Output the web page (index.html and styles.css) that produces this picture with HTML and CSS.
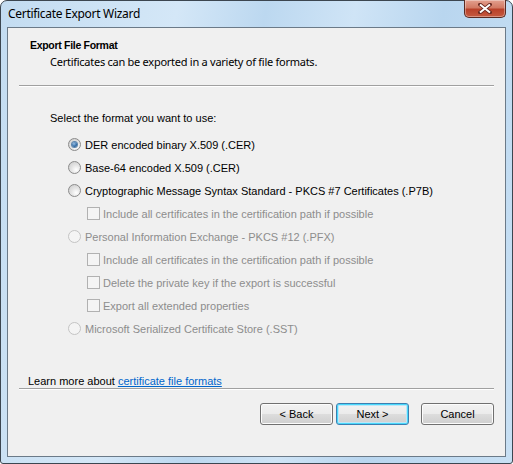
FILE: index.html
```html
<!DOCTYPE html>
<html lang="en">
<head>
  <meta charset="UTF-8" />
  <title>Certificate Export Wizard</title>
  <link rel="stylesheet" href="styles.css">
</head>
<body>
  <div class="window">
    <div class="titlebar">
      <span class="title">Certificate Export Wizard</span>
      <button class="close" aria-label="Close">
        <svg width="14" height="11" viewBox="0 0 14 11">
          <path d="M2 1.5 L12 9.5 M12 1.5 L2 9.5" stroke="#6b2a22" stroke-width="3.6" stroke-linecap="square"/>
          <path d="M2 1.5 L12 9.5 M12 1.5 L2 9.5" stroke="#ffffff" stroke-width="2"/>
        </svg>
      </button>
    </div>

    <div class="client">
      <div class="header">
        <div class="heading">Export File Format</div>
        <div class="subheading">Certificates can be exported in a variety of file formats.</div>
      </div>
      <div class="sep"></div>

      <div class="content">
        <p class="prompt">Select the format you want to use:</p>
        <ul class="options">
          <li class="opt"><span class="radio checked"></span>DER encoded binary X.509 (.CER)</li>
          <li class="opt"><span class="radio"></span>Base-64 encoded X.509 (.CER)</li>
          <li class="opt"><span class="radio"></span>Cryptographic Message Syntax Standard - PKCS #7 Certificates (.P7B)</li>
          <li class="opt sub disabled"><span class="check"></span>Include all certificates in the certification path if possible</li>
          <li class="opt disabled"><span class="radio"></span>Personal Information Exchange - PKCS #12 (.PFX)</li>
          <li class="opt sub disabled"><span class="check"></span>Include all certificates in the certification path if possible</li>
          <li class="opt sub disabled"><span class="check"></span>Delete the private key if the export is successful</li>
          <li class="opt sub disabled"><span class="check"></span>Export all extended properties</li>
          <li class="opt disabled"><span class="radio"></span>Microsoft Serialized Certificate Store (.SST)</li>
        </ul>
        <p class="learn">Learn more about <a href="#">certificate file formats</a></p>
      </div>

      <div class="sep"></div>
      <div class="buttons">
        <button class="btn">&lt; Back</button>
        <button class="btn default">Next &gt;</button>
        <button class="btn cancel">Cancel</button>
      </div>
    </div>
  </div>
</body>
</html>
```

FILE: styles.css
```css
* { box-sizing: border-box; }
body {
  margin: 0;
  background: #ffffff;
  font-family: "Liberation Sans", Arial, sans-serif;
  font-size: 11px;
  color: #000;
}
.window {
  width: 513px;
  height: 464px;
  border: 1px solid #3c4650;
  border-radius: 7px 7px 3px 3px;
  background: linear-gradient(100deg, #c3dcf1 0%, #d4e7f7 30%, #bcd8f0 45%, #cfe4f6 60%, #b9d6ef 75%, #c8e0f4 100%);
  display: flex;
  flex-direction: column;
}
.titlebar {
  height: 26px;
  display: flex;
  justify-content: space-between;
  align-items: flex-start;
  padding-left: 7px;
}
.title {
  font-family: "Noto Sans", sans-serif;
  font-size: 12px;
  line-height: 26px;
  color: #000;
  letter-spacing: -0.3px;
}
.close {
  width: 42px;
  height: 18px;
  margin-top: -1px;
  margin-right: 6px;
  border: 1px solid #5a2a22;
  border-top: none;
  border-radius: 0 0 5px 5px;
  background: linear-gradient(#e3a08f 0%, #d27a64 45%, #b9412a 55%, #c55a40 100%);
  box-shadow: inset 0 0 0 1px rgba(255, 255, 255, 0.35);
  display: flex;
  align-items: center;
  justify-content: center;
  padding: 0;
}
.client {
  margin: 0 6px;
  height: 430px;
  border: 1px solid #6b7a88;
  background: #f0f0f0;
  display: flex;
  flex-direction: column;
}
.header {
  height: 57px;
  padding: 10px 0 0 22px;
}
.heading {
  font-weight: bold;
  font-size: 10.5px;
  letter-spacing: -0.3px;
  line-height: 14px;
}
.subheading {
  font-family: "Noto Sans", sans-serif;
  font-size: 11px;
  line-height: 15px;
  margin: 2px 0 0 20px;
  letter-spacing: -0.26px;
}
.sep {
  height: 2px;
  margin: 0 11px;
  border-top: 1px solid #a0a0a0;
  border-bottom: 1px solid #ffffff;
}
.content {
  height: 301px;
  padding: 24px 0 0 42px;
}
.prompt {
  margin: 0;
  line-height: 14px;
}
.options {
  list-style: none;
  margin: 8px 0 0 18px;
  padding: 0;
}
.opt {
  height: 23px;
  display: flex;
  align-items: center;
}
.opt.sub { padding-left: 19px; }
.opt.disabled { color: #8d8d8d; }
.radio {
  width: 13px;
  height: 13px;
  margin-right: 4px;
  border-radius: 50%;
  border: 1px solid #8b8b8b;
  background: radial-gradient(circle at 65% 70%, #ffffff 0%, #e4e4e4 45%, #c8c8c8 100%);
  display: flex;
  align-items: center;
  justify-content: center;
}
.radio.checked::after {
  content: "";
  width: 5px;
  height: 5px;
  border-radius: 50%;
  background: radial-gradient(circle at 40% 35%, #9ac0e4 0%, #2f6aa5 60%, #1c3f66 100%);
  box-shadow: 0 0 0 1px #5e86ad;
}
.disabled .radio {
  border-color: #c4c4c4;
  background: #f4f4f4;
}
.check {
  width: 13px;
  height: 13px;
  margin-right: 3px;
  border: 1px solid #b1b1b1;
  background: #f4f4f4;
}
.learn {
  margin: 34px 0 0 -22px;
  line-height: 14px;
}
.learn a { color: #0066cc; }
.buttons {
  display: flex;
  justify-content: flex-end;
  padding: 13px 11px 0 0;
}
.btn {
  width: 73px;
  height: 22px;
  font-family: "Liberation Sans", Arial, sans-serif;
  font-size: 11px;
  color: #000;
  border: 1px solid #707070;
  border-radius: 3px;
  background: linear-gradient(#f2f2f2 0%, #ebebeb 50%, #dddddd 50%, #cfcfcf 100%);
  box-shadow: inset 0 0 0 1px #fcfcfc;
  padding: 0;
}
.btn.default {
  margin-left: 3px;
  border-color: #3c7fb1;
  box-shadow: inset 0 0 0 1px #48d8fb, inset 0 0 0 2px #bde6f8;
}
.btn.cancel { margin-left: 12px; }
```
